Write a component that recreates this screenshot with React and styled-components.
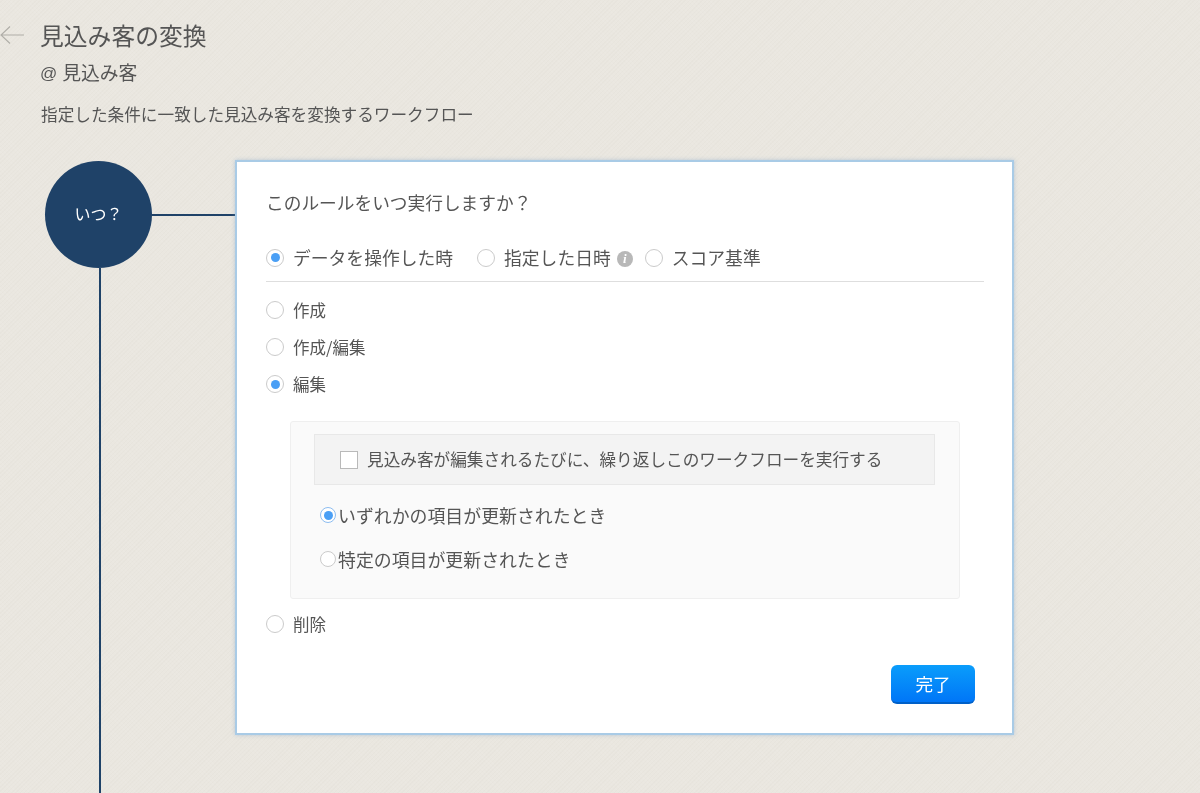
import React from 'react';
import styled, { createGlobalStyle } from 'styled-components';

const navy = '#1f4268';
const textColor = '#555';
const blue = '#4a9ff5';

const GlobalStyle = createGlobalStyle`
  html, body {
    margin: 0;
    height: 100%;
  }

  body {
    background-color: #eae7e0;
    background-image:
      repeating-linear-gradient(45deg, rgba(255, 255, 255, 0.05) 0 1px, transparent 1px 3px),
      repeating-linear-gradient(-45deg, rgba(120, 110, 90, 0.025) 0 1px, transparent 1px 3px);
    color: ${textColor};
    font-family: "Noto Sans CJK JP", "Noto Sans", sans-serif;
  }
`;

const Page = styled.div`
  box-sizing: border-box;
  display: flex;
  filter: blur(0.3px);
  flex-direction: column;
  height: 793px;
  overflow: hidden;
  width: 1200px;
`;

const Header = styled.header`
  display: grid;
  flex: 0 0 auto;
  grid-template-columns: 41px 1fr;
  padding-top: 17px;
`;

const BackArrow = styled.svg`
  align-self: center;
  display: block;
  height: 20px;
  width: 25px;
`;

const Title = styled.h1`
  font-size: 23.8px;
  font-weight: 400;
  line-height: 36px;
  margin: 0 0 0 -1px;
`;

const Entity = styled.div`
  align-items: center;
  display: flex;
  font-size: 18.8px;
  gap: 5px;
  grid-column: 2;
  height: 28px;
  line-height: 28px;
  margin: 5px 0 0 -1px;
`;

const At = styled.span`
  font-family: "Liberation Sans", sans-serif;
  font-size: 17px;
  line-height: 1;
  padding-top: 2px;
`;

const Description = styled.p`
  font-size: 16.65px;
  grid-column: 2;
  line-height: 24px;
  margin: 16px 0 0;
`;

const Flow = styled.div`
  display: flex;
  flex: 1 1 auto;
  margin-top: 34px;
  min-height: 0;
`;

const Timeline = styled.div`
  box-sizing: border-box;
  display: flex;
  flex: 0 0 235px;
  flex-direction: column;
  padding-left: 45px;
  padding-top: 1px;
`;

const StepRow = styled.div`
  align-items: center;
  display: flex;
`;

const Circle = styled.div`
  align-items: center;
  background: ${navy};
  border-radius: 50%;
  box-sizing: border-box;
  color: #fff;
  display: flex;
  flex: 0 0 107px;
  font-size: 16px;
  height: 107px;
  justify-content: center;
  padding-bottom: 3px;
`;

const Connector = styled.div`
  background: ${navy};
  flex: 1 1 auto;
  height: 2px;
  margin-top: 1px;
`;

const Spine = styled.div`
  background: ${navy};
  flex: 1 1 auto;
  margin-left: 54px;
  width: 2px;
`;

const Card = styled.section`
  background: #fff;
  border: 2px solid #a9cbe6;
  box-shadow: 0 0 4px rgba(120, 160, 200, 0.45);
  box-sizing: border-box;
  display: flex;
  flex: 0 0 779px;
  flex-direction: column;
  height: 575px;
  padding: 27px 28px 0 29px;
`;

const Question = styled.h2`
  font-size: 17.7px;
  font-weight: 400;
  line-height: 26px;
  margin: 0;
`;

const ModeRow = styled.div`
  align-items: center;
  border-bottom: 1px solid #dedede;
  display: flex;
  height: 42px;
  margin-top: 21px;
  padding-bottom: 3px;
`;

const Option = styled.label`
  align-items: center;
  display: flex;
  font-size: ${props => props.size ?? 17.8}px;
  gap: ${props => props.gap ?? 9}px;
  height: 37px;
  line-height: 26px;
  margin-right: ${props => props.trailing ?? 0}px;
  white-space: nowrap;
`;

const Radio = styled.span`
  align-items: center;
  background: #fff;
  border: 1.5px solid ${props => (props.focus ? '#8dbdf0' : '#cbcbcb')};
  border-radius: 50%;
  box-sizing: border-box;
  display: flex;
  flex: 0 0 auto;
  height: ${props => props.size ?? 18}px;
  justify-content: center;
  margin-top: 1px;
  width: ${props => props.size ?? 18}px;

  &::after {
    background: ${blue};
    border-radius: 50%;
    content: '';
    display: ${props => (props.checked ? 'block' : 'none')};
    height: 9px;
    width: 9px;
  }
`;

const InfoBadge = styled.span`
  align-items: center;
  background: #b8b8b8;
  border-radius: 50%;
  color: #fff;
  display: flex;
  font-family: "Liberation Serif", serif;
  font-size: 13px;
  font-style: italic;
  font-weight: 700;
  height: 16px;
  justify-content: center;
  margin: 3px 12px 0 6px;
  width: 16px;
`;

const OptionList = styled.div`
  display: flex;
  flex-direction: column;
  margin-top: 9px;
`;

const EditPanel = styled.div`
  background: #fafafa;
  border: 1px solid #efefef;
  border-radius: 3px;
  box-sizing: border-box;
  display: flex;
  flex-direction: column;
  height: 178px;
  margin: 19px 24px 6px 24px;
  padding: 12px 24px 0 23px;
`;

const RepeatRow = styled.label`
  align-items: center;
  background: #f3f3f3;
  border: 1px solid #e8e8e8;
  box-sizing: border-box;
  display: flex;
  flex: 0 0 51px;
  font-size: 16.65px;
  gap: 9px;
  padding-bottom: 2px;
  padding-left: 25px;
  white-space: nowrap;
`;

const Checkbox = styled.span`
  background: #fff;
  border: 1.5px solid #b9b9b9;
  box-sizing: border-box;
  flex: 0 0 18px;
  height: 18px;
  margin-top: 2px;
`;

const SubOptions = styled.div`
  display: flex;
  flex-direction: column;
  gap: 7px;
  margin-top: 11px;
  padding-left: 6px;
`;

const Footer = styled.div`
  display: flex;
  justify-content: flex-end;
  margin-top: 23px;
  padding-right: 9px;
`;

const DoneButton = styled.button`
  background: linear-gradient(#0a9dfb, #0076f7);
  border: 0;
  border-bottom: 2px solid #0060c8;
  border-radius: 6px;
  color: #fff;
  font-family: inherit;
  font-size: 17.6px;
  height: 39px;
  padding: 0;
  width: 84px;
`;

const App = () => (
  <Page>
    <GlobalStyle />
    <Header>
      <BackArrow viewBox="0 0 25 20" fill="none" stroke="#b0aea8" strokeWidth="1.1">
        <path d="M24 10H1M10 1.5 1 10l9 8.5" />
      </BackArrow>
      <Title>見込み客の変換</Title>
      <Entity>
        <At>@</At>
        <span>見込み客</span>
      </Entity>
      <Description>指定した条件に一致した見込み客を変換するワークフロー</Description>
    </Header>
    <Flow>
      <Timeline>
        <StepRow>
          <Circle>いつ？</Circle>
          <Connector />
        </StepRow>
        <Spine />
      </Timeline>
      <Card>
        <Question>このルールをいつ実行しますか？</Question>
        <ModeRow>
          <Option trailing={24}>
            <Radio checked />
            データを操作した時
          </Option>
          <Option>
            <Radio />
            指定した日時
          </Option>
          <InfoBadge>i</InfoBadge>
          <Option>
            <Radio />
            スコア基準
          </Option>
        </ModeRow>
        <OptionList>
          <Option size={16.5}>
            <Radio />
            作成
          </Option>
          <Option size={16.5}>
            <Radio />
            作成/編集
          </Option>
          <Option size={16.5}>
            <Radio checked />
            編集
          </Option>
          <EditPanel>
            <RepeatRow>
              <Checkbox />
              見込み客が編集されるたびに、繰り返しこのワークフローを実行する
            </RepeatRow>
            <SubOptions>
              <Option gap={2} size={17.9}>
                <Radio checked focus size={16} />
                いずれかの項目が更新されたとき
              </Option>
              <Option gap={2} size={17.9}>
                <Radio size={16} />
                特定の項目が更新されたとき
              </Option>
            </SubOptions>
          </EditPanel>
          <Option size={16.5}>
            <Radio />
            削除
          </Option>
        </OptionList>
        <Footer>
          <DoneButton>完了</DoneButton>
        </Footer>
      </Card>
    </Flow>
  </Page>
);

export default App;
